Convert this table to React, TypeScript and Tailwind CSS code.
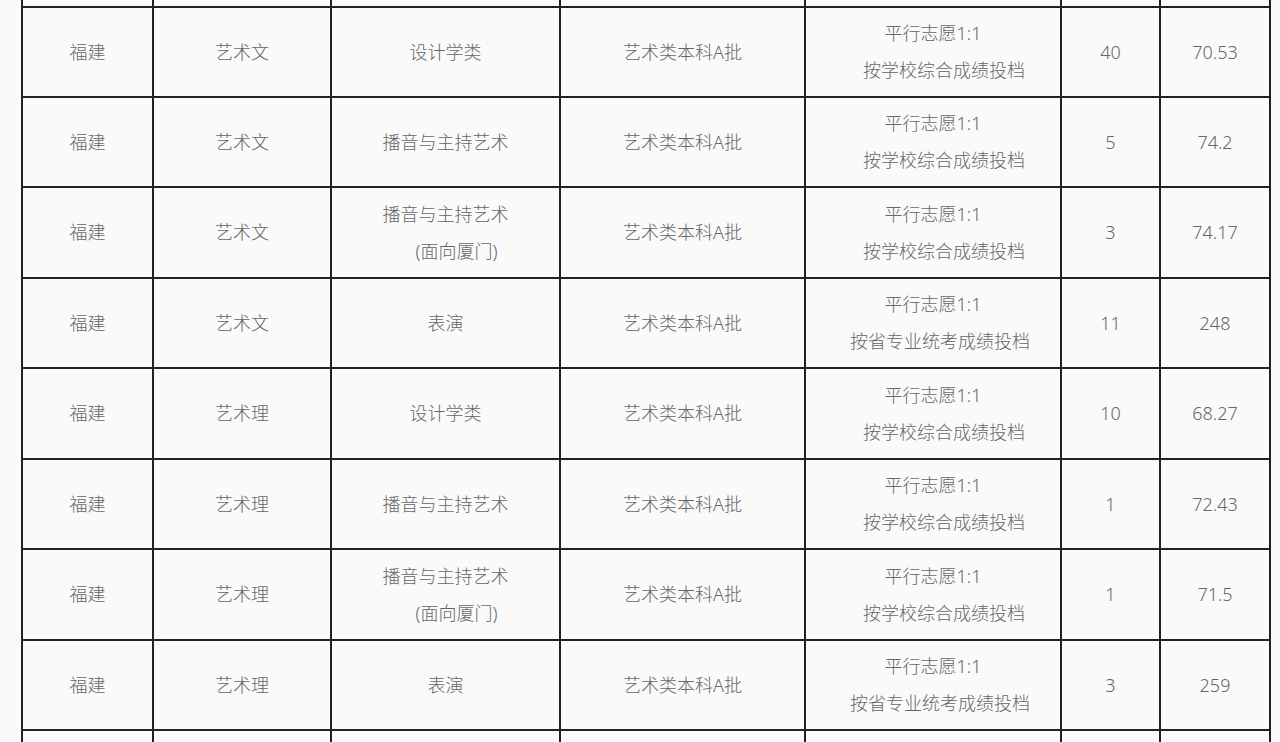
const rows = [
  { prov: "福建", type: "艺术文", major: ["设计学类"], batch: "艺术类本科A批", rule: "按学校综合成绩投档", plan: "40", score: "70.53" },
  { prov: "福建", type: "艺术文", major: ["播音与主持艺术"], batch: "艺术类本科A批", rule: "按学校综合成绩投档", plan: "5", score: "74.2" },
  { prov: "福建", type: "艺术文", major: ["播音与主持艺术", "(面向厦门)"], batch: "艺术类本科A批", rule: "按学校综合成绩投档", plan: "3", score: "74.17" },
  { prov: "福建", type: "艺术文", major: ["表演"], batch: "艺术类本科A批", rule: "按省专业统考成绩投档", plan: "11", score: "248" },
  { prov: "福建", type: "艺术理", major: ["设计学类"], batch: "艺术类本科A批", rule: "按学校综合成绩投档", plan: "10", score: "68.27" },
  { prov: "福建", type: "艺术理", major: ["播音与主持艺术"], batch: "艺术类本科A批", rule: "按学校综合成绩投档", plan: "1", score: "72.43" },
  { prov: "福建", type: "艺术理", major: ["播音与主持艺术", "(面向厦门)"], batch: "艺术类本科A批", rule: "按学校综合成绩投档", plan: "1", score: "71.5" },
  { prov: "福建", type: "艺术理", major: ["表演"], batch: "艺术类本科A批", rule: "按省专业统考成绩投档", plan: "3", score: "259" },
]

const heights = ["h-[90px]", "h-[90px]", "h-[91px]", "h-[90px]", "h-[91px]", "h-[90px]", "h-[91px]", "h-[90px]"]

const td = "border-2 border-[#222] text-center align-middle p-0"

export default function App() {
  return (
    <div className="h-[742px] w-[1280px] overflow-hidden bg-[#fafafa] font-[family-name:'Noto_Sans','Noto_Sans_CJK_SC',sans-serif] text-[18px] font-light text-[#666]">
      <table className="ml-[21px] -mt-[1px] table-fixed border-collapse">
        <colgroup>
          <col className="w-[131px]" />
          <col className="w-[178px]" />
          <col className="w-[229px]" />
          <col className="w-[245px]" />
          <col className="w-[256px]" />
          <col className="w-[99px]" />
          <col className="w-[110px]" />
        </colgroup>
        <tbody>
          {/* cut-off row above */}
          <tr className="h-[8px]">
            {Array.from({ length: 7 }).map((_, i) => (
              <td key={i} className={td + " border-t-0"} />
            ))}
          </tr>

          {rows.map((r, i) => (
            <tr key={i} className={heights[i]}>
              <td className={td}>{r.prov}</td>
              <td className={td}>{r.type}</td>
              <td className={td}>
                <div className="leading-[37px]">{r.major[0]}</div>
                {r.major[1] && <div className="pl-[22px] leading-[37px]">{r.major[1]}</div>}
              </td>
              <td className={td}>{r.batch}</td>
              <td className={td}>
                <div className="leading-[37px]">平行志愿1:1</div>
                <div className={(r.rule.length > 9 ? "pl-[14px]" : "pl-[22px]") + " leading-[37px]"}>{r.rule}</div>
              </td>
              <td className={td}>{r.plan}</td>
              <td className={td}>{r.score}</td>
            </tr>
          ))}

          {/* next row, cut off at the bottom */}
          <tr className="h-[40px]">
            {Array.from({ length: 7 }).map((_, i) => (
              <td key={i} className={td} />
            ))}
          </tr>
        </tbody>
      </table>
    </div>
  )
}
